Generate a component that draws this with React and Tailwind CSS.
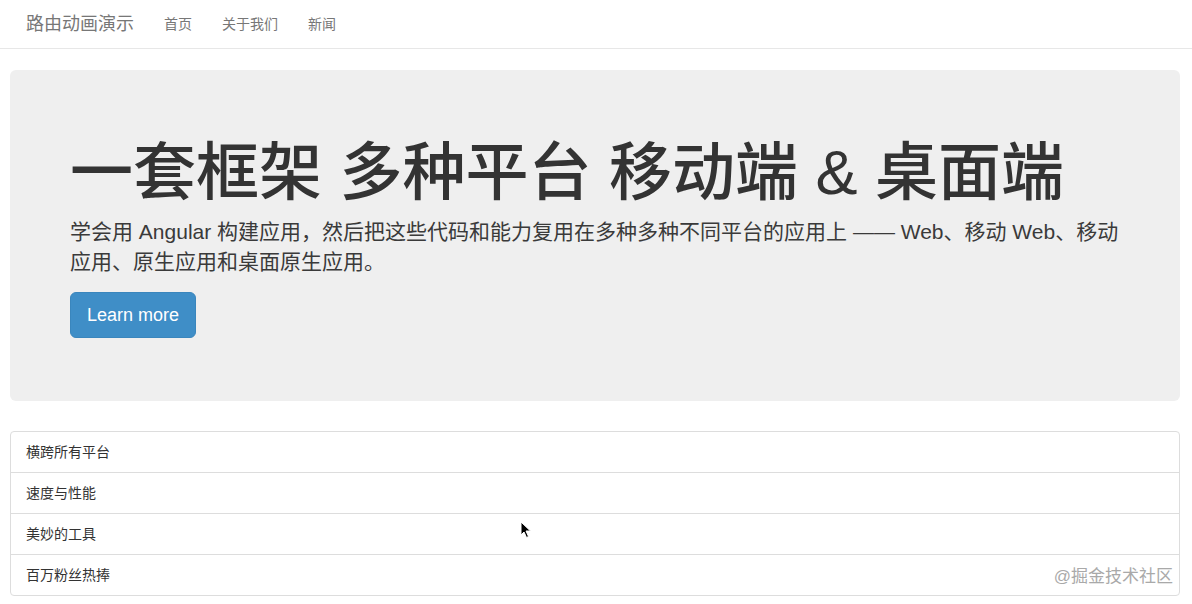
import React from 'react';

const font = { fontFamily: '"Liberation Sans", "Noto Sans CJK SC", sans-serif' };

const features = ['横跨所有平台', '速度与性能', '美妙的工具', '百万粉丝热捧'];

function Navbar() {
  return (
    <nav className="h-[49px] border-b border-[#e7e7e7] bg-white flex items-center px-[11px]">
      <a className="px-[15px] text-[18px] leading-[20px] text-[#777]">路由动画演示</a>
      <ul className="flex">
        {['首页', '关于我们', '新闻'].map((item) => (
          <li key={item} className="px-[15px] text-[14px] leading-[20px] text-[#777]">
            {item}
          </li>
        ))}
      </ul>
    </nav>
  );
}

export default function App() {
  return (
    <div className="relative w-[1192px] h-[604px] overflow-hidden bg-white text-[#333]" style={font}>
      <Navbar />

      <div className="pl-[10px] pr-[12px]">
        {/* Jumbotron */}
        <div className="mt-[21px] rounded-[6px] bg-[#efefef] px-[60px] pt-[48px] pb-[48px]">
          <h1 className="mt-[20px] mb-[10px] text-[63px] leading-[69px] font-medium text-[#333]">
            一套框架 多种平台 移动端 &amp; 桌面端
          </h1>
          <p className="text-[21px] leading-[30px] text-[#3a3a3a] mb-[15px]">
            学会用 Angular 构建应用，然后把这些代码和能力复用在多种多种不同平台的应用上 —— Web、移动 Web、移动应用、原生应用和桌面原生应用。
          </p>
          <p className="mb-[15px]">
            <a className="inline-block rounded-[6px] bg-[#3f8ec7] border border-[#3a86bd] text-white text-[18px] leading-[24px] px-[16px] py-[10px]">
              Learn more
            </a>
          </p>
        </div>

        {/* List group */}
        <ul className="mt-[30px] rounded-[4px] border border-[#ddd]">
          {features.map((f, i) => (
            <li
              key={f}
              className={`px-[15px] py-[10px] text-[14px] leading-[20px] text-[#333] ${i > 0 ? 'border-t border-[#ddd]' : ''}`}
            >
              {f}
            </li>
          ))}
        </ul>
      </div>

      {/* cursor */}
      <svg className="absolute left-[520px] top-[521px]" width="12" height="18" viewBox="0 0 12 18">
        <path d="M1 1 L1 14 L4 11 L6.5 16.5 L8.5 15.5 L6 10 L10.5 10 Z" fill="#000" stroke="#fff" strokeWidth="1" />
      </svg>

      {/* watermark */}
      <div className="absolute right-[19px] top-[565px] text-[17px] leading-[24px] text-[#a9a9a9]">
        @掘金技术社区
      </div>
    </div>
  );
}
